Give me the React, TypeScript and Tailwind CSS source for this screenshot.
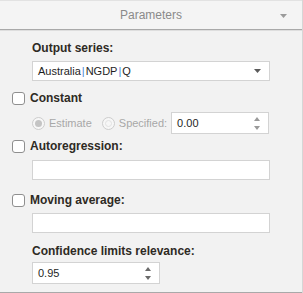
const Caret = ({ up = false, color = "#5a5a5a" }: { up?: boolean; color?: string }) => (
  <svg width="7" height="4" viewBox="0 0 7 4" className="block">
    {up ? (
      <polygon points="3.5,0 7,4 0,4" fill={color} />
    ) : (
      <polygon points="0,0 7,0 3.5,4" fill={color} />
    )}
  </svg>
);

const SpinArrows = ({ color }: { color: string }) => (
  <div className="flex flex-col items-center gap-[5px]">
    <svg width="6" height="4" viewBox="0 0 6 4" className="block">
      <polygon points="3,0 6,4 0,4" fill={color} />
    </svg>
    <svg width="6" height="4" viewBox="0 0 6 4" className="block">
      <polygon points="0,0 6,0 3,4" fill={color} />
    </svg>
  </div>
);

const CheckRow = ({ label }: { label: string }) => (
  <div className="flex items-center h-[15px] pl-[12px]">
    <span className="w-[13px] h-[13px] rounded-[3px] border border-[#8f8f8f] bg-white" />
    <span className="ml-[5px] text-[12px] leading-[15px] font-bold text-[#2e2a24]">{label}</span>
  </div>
);

const Radio = ({ checked, label }: { checked: boolean; label: string }) => (
  <div className="flex items-center">
    <span className="w-[13px] h-[13px] rounded-full border border-[#cdcdcd] bg-[#f7f7f7] flex items-center justify-center">
      {checked ? (
        <span className="w-[7px] h-[7px] rounded-full bg-[#c4c4c4]" />
      ) : (
        <span className="w-[7px] h-[7px] rounded-full border border-[#e2e2e2]" />
      )}
    </span>
    <span className="ml-[4px] text-[11px] text-[#a8a8a8]">{label}</span>
  </div>
);

export default function App() {
  return (
    <div className="w-[303px] h-[293px] bg-[#f2f2f2] border-r border-[#d6d6d6] flex flex-col font-['Liberation_Sans',Arial,sans-serif]">
      {/* header */}
      <div className="h-[29px] shrink-0 bg-[#f4f4f4] border-t border-[#e2e2e2] relative flex items-center justify-center">
        <span className="text-[12px] text-[#8a8a8a]">Parameters</span>
        <div className="absolute right-[15px] top-[13px]">
          <Caret color="#9a9a9a" />
        </div>
      </div>
      <div className="h-px bg-[#a9a9a9]" />
      <div className="h-px bg-[#dedede]" />

      <div className="flex-1 flex flex-col">
        <div className="mt-[10px] pl-[32px] text-[12px] leading-[15px] font-bold text-[#2e2a24]">Output series:</div>
        <div className="mt-[5px] ml-[32px] w-[238px] h-[20px] bg-white border border-[#d3d3d3] flex items-center px-[5px]">
          <span className="text-[11px] text-[#1e1e1e] flex-1">
            Australia<span className="text-[#4a86d8] mx-[1px]">|</span>NGDP<span className="text-[#4a86d8] mx-[1px]">|</span>Q
          </span>
          <span className="mr-[3px]">
            <Caret />
          </span>
        </div>

        <div className="mt-[10px]">
          <CheckRow label="Constant" />
        </div>
        <div className="mt-[6px] pl-[32px] flex items-center">
          <Radio checked label="Estimate" />
          <div className="ml-[10px]">
            <Radio checked={false} label="Specified:" />
          </div>
          <div className="ml-[4px] w-[98px] h-[22px] bg-white border border-[#d3d3d3] flex items-center justify-between pl-[5px] pr-[8px]">
            <span className="text-[11px] text-[#1e1e1e]">0.00</span>
            <SpinArrows color="#9a9a9a" />
          </div>
        </div>

        <div className="mt-[5px]">
          <CheckRow label="Autoregression:" />
        </div>
        <div className="mt-[6px] ml-[32px] w-[238px] h-[20px] bg-white border border-[#d3d3d3]" />

        <div className="mt-[13px]">
          <CheckRow label="Moving average:" />
        </div>
        <div className="mt-[5px] ml-[32px] w-[238px] h-[20px] bg-white border border-[#d3d3d3]" />

        <div className="mt-[11px] pl-[32px] text-[12px] leading-[15px] font-bold text-[#2e2a24]">
          Confidence limits relevance:
        </div>
        <div className="mt-[3px] ml-[32px] w-[128px] h-[22px] bg-white border border-[#d3d3d3] flex items-center justify-between pl-[5px] pr-[8px]">
          <span className="text-[11px] text-[#1e1e1e]">0.95</span>
          <SpinArrows color="#6a6a6a" />
        </div>
      </div>
      <div className="h-px bg-[#a9a9a9]" />
    </div>
  );
}
